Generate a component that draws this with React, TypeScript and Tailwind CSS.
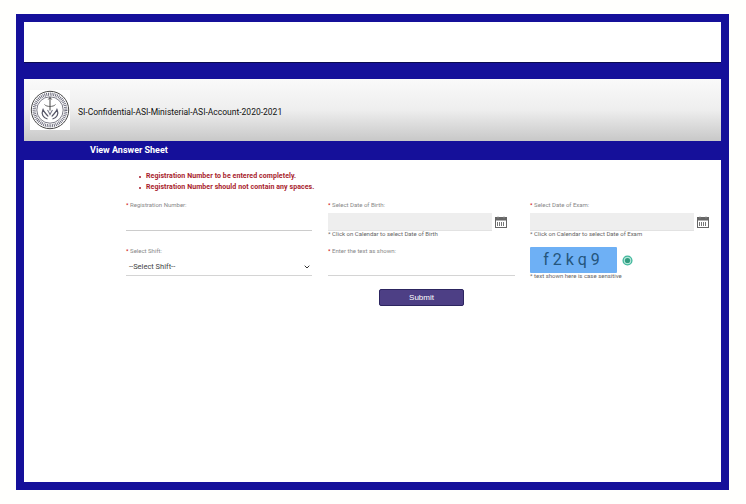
const Cal = () => (
  <svg width="12" height="12" viewBox="0 0 12 12" className="shrink-0">
    <rect x="0.5" y="1.5" width="11" height="10" fill="#fff" stroke="#666" />
    <rect x="0.5" y="1.5" width="11" height="3" fill="#666" />
    <path d="M3 0.5v2M9 0.5v2" stroke="#888" />
    <path d="M2.5 6v4M4.5 6v4M6.5 6v4M8.5 6v4" stroke="#777" />
  </svg>
);

const Seal = () => (
  <svg width="40" height="40" viewBox="0 0 40 40" fill="none">
    <circle cx="20" cy="20" r="18.7" stroke="#333" strokeWidth="0.9" />
    <circle cx="20" cy="20" r="15.8" stroke="#667" strokeWidth="3.2" strokeDasharray="0.9 0.9" />
    <circle cx="20" cy="20" r="13.2" stroke="#445" strokeWidth="0.7" />
    <path d="M20 7.5v13M18.3 9.5L20 7.5l1.7 2" stroke="#333" strokeWidth="0.9" />
    <path d="M14.5 14.5c2 2.6 9 2.6 11 0" stroke="#555" strokeWidth="0.9" />
    <path d="M17.5 29c-4.5-1-6.5-5-4.5-9.5 1 2.8 3.4 4.6 5.2 7M22.5 29c4.5-1 6.5-5 4.5-9.5-1 2.8-3.4 4.6-5.2 7" stroke="#556" strokeWidth="1.2" />
    <path d="M17.5 20c1.2 1.8 1.8 3 2.5 4.5.7-1.5 1.3-2.7 2.5-4.5" stroke="#778" strokeWidth="1.1" />
  </svg>
);

const Label = ({ children }: { children: string }) => (
  <div className="text-[6px] leading-[8px] text-[#888]">
    <span className="text-[#c00]">* </span>
    {children}
  </div>
);

const Note = ({ children }: { children: string }) => (
  <div className="text-[6px] leading-[8px] text-[#666]">{children}</div>
);

const DateField = ({ label, note }: { label: string; note: string }) => (
  <div className="flex flex-col">
    <Label>{label}</Label>
    <div className="mt-[4px] flex items-center gap-[3px]">
      <div className="h-[18px] w-[164px] border-b border-[#e2e2e2] bg-[#eeeeee]" />
      <Cal />
    </div>
    <div className="-mt-[1px]">
      <Note>{note}</Note>
    </div>
  </div>
);

export default function App() {
  return (
    <div className="h-[504px] w-[746px] bg-[#fffffd] pl-4 pt-[14px] font-['Roboto',sans-serif]">
      <div className="flex h-[476px] w-[713px] flex-col bg-[#15109a] p-2">
        <div className="h-[41px] border-b border-[#0b0b50] bg-white" />
        <div className="mt-[16px] flex h-[62px] items-center bg-gradient-to-b from-[#fafafa] via-[#eeeeee] to-[#c8c8c8] pl-[6px]">
          <div className="flex h-[40px] w-[40px] items-center justify-center bg-white">
            <Seal />
          </div>
          <span className="ml-[8px] mt-[4px] text-[8.5px] text-[#111]">
            SI-Confidential-ASI-Ministerial-ASI-Account-2020-2021
          </span>
        </div>
        <div className="flex h-[19px] items-center pl-[66px] pt-[1px] text-[9px] font-bold text-white">
          View Answer Sheet
        </div>
        <div className="flex-1 bg-white pl-[102px] pt-[11px]">
          <ul className="ml-[13px] text-[7px] font-bold leading-[11px] tracking-[0.08px] text-[#a81c2c]">
            <li className="flex items-center gap-[5px]">
              <span className="h-[2px] w-[2px] rounded-full bg-[#a81c2c]" />
              Registration Number to be entered completely.
            </li>
            <li className="flex items-center gap-[5px]">
              <span className="h-[2px] w-[2px] rounded-full bg-[#a81c2c]" />
              Registration Number should not contain any spaces.
            </li>
          </ul>
          <div className="mt-[8px] grid grid-cols-[186px_186px_180px] gap-x-4">
            <div className="flex flex-col">
              <Label>Registration Number:</Label>
              <div className="mt-[21px] border-b border-[#cccccc]" />
            </div>
            <DateField label="Select Date of Birth:" note="* Click on Calendar to select Date of Birth" />
            <DateField label="Select Date of Exam:" note="* Click on Calendar to select Date of Exam" />
          </div>
          <div className="mt-[9px] grid grid-cols-[186px_186px_180px] gap-x-4">
            <div className="flex flex-col">
              <Label>Select Shift:</Label>
              <div className="mt-[4px] flex h-[17px] items-center justify-between border-b border-[#d4d4d4] pl-[3px] pr-[2px] text-[7.5px] text-[#444]">
                --Select Shift--
                <svg width="6" height="4" viewBox="0 0 6 4" fill="none">
                  <path d="M0.7 0.7L3 3l2.3-2.3" stroke="#333" strokeWidth="1" />
                </svg>
              </div>
            </div>
            <div className="flex flex-col">
              <Label>Enter the text as shown:</Label>
              <div className="mt-[20px] w-[187px] border-b border-[#d4d4d4]" />
            </div>
            <div className="flex flex-col">
              <div className="flex items-center gap-[5px]">
                <div className="flex h-[26px] w-[87px] items-center justify-center rounded-[1px] bg-[#6eb0f5] text-[16px] tracking-[4px] text-[#24557c]">
                  f2kq9
                </div>
                <svg width="11" height="11" viewBox="0 0 11 11" fill="none">
                  <circle cx="5.5" cy="5.5" r="4.4" fill="#b5e6d8" stroke="#3fb79c" strokeWidth="1.3" />
                  <circle cx="5.5" cy="5.5" r="2.6" fill="#339c80" />
                </svg>
              </div>
              <div className="-mt-[1px]">
                <Note>* text shown here is case sensitive</Note>
              </div>
            </div>
          </div>
          <div className="mt-[9px] flex justify-center pr-[4px]">
            <button className="h-[17px] w-[85px] rounded-[2px] border border-[#2c2560] bg-[#4d3f85] font-['Liberation_Sans',sans-serif] text-[8px] text-white">
              Submit
            </button>
          </div>
        </div>
      </div>
    </div>
  );
}
